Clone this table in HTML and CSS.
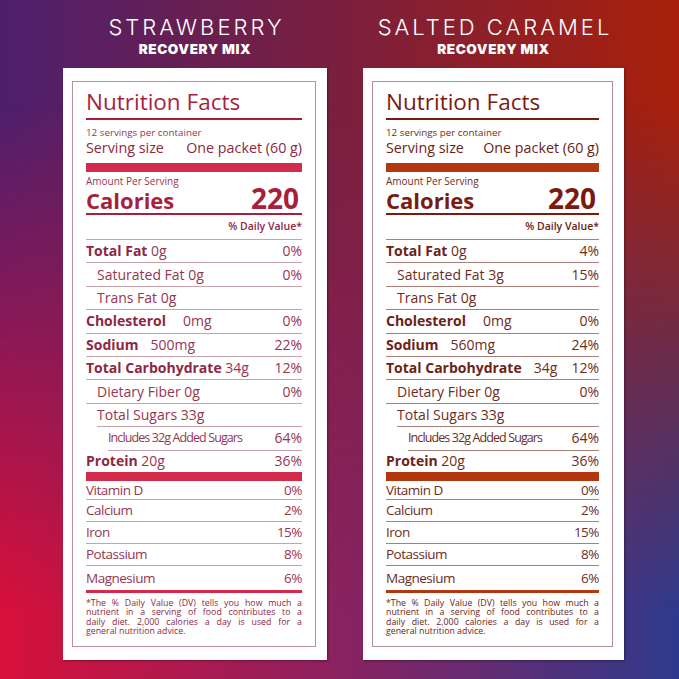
FILE: index.html
```html
<!DOCTYPE html>
<html lang="en">
<head>
<meta charset="utf-8">
<title>Recovery Mix Nutrition Facts</title>
<link rel="stylesheet" href="styles.css">
</head>
<body>
<main class="page">
  <section class="col col-left">
    <header class="flavor">
      <div class="flavor-name">STRAWBERRY</div>
      <div class="flavor-sub">RECOVERY MIX</div>
    </header>
    <div class="card straw">
      <div class="label">
        <h1 class="title">Nutrition Facts</h1>
        <div class="servings">12 servings per container</div>
        <div class="serving-size"><span>Serving size</span><span>One packet (60 g)</span></div>
        <div class="bar"></div>
        <div class="amount">Amount Per Serving</div>
        <div class="calories"><span class="cal-label">Calories</span><span class="cal-num">220</span></div>
        <div class="dv">% Daily Value*</div>
        <div class="row"><span><b>Total Fat</b> 0g</span><span>0%</span></div>
        <div class="row sub"><span>Saturated Fat 0g</span><span>0%</span></div>
        <div class="row sub"><span>Trans Fat 0g</span><span></span></div>
        <div class="row"><span><b>Cholesterol</b><span class="gap-l">0mg</span></span><span>0%</span></div>
        <div class="row"><span><b>Sodium</b><span class="gap-m">500mg</span></span><span>22%</span></div>
        <div class="row"><span><b>Total Carbohydrate</b> 34g</span><span>12%</span></div>
        <div class="row sub"><span>Dietary Fiber 0g</span><span>0%</span></div>
        <div class="row sub line-indent"><span>Total Sugars 33g</span><span></span></div>
        <div class="row subsub line-indent2"><span class="cond">Includes 32g Added Sugars</span><span>64%</span></div>
        <div class="row protein"><span><b>Protein</b> 20g</span><span>36%</span></div>
        <div class="bar"></div>
        <div class="vit first"><span>Vitamin D</span><span>0%</span></div>
        <div class="vit"><span>Calcium</span><span>2%</span></div>
        <div class="vit"><span>Iron</span><span>15%</span></div>
        <div class="vit"><span>Potassium</span><span>8%</span></div>
        <div class="vit last"><span>Magnesium</span><span>6%</span></div>
        <p class="foot">
          <span class="fl">*The % Daily Value (DV) tells you how much a</span>
          <span class="fl">nutrient in a serving of food contributes to a</span>
          <span class="fl">daily diet. 2,000 calories a day is used for a</span>
          <span class="fl end">general nutrition advice.</span>
        </p>
      </div>
    </div>
  </section>

  <section class="col col-right">
    <header class="flavor">
      <div class="flavor-name">SALTED CARAMEL</div>
      <div class="flavor-sub">RECOVERY MIX</div>
    </header>
    <div class="card caramel">
      <div class="label">
        <h1 class="title">Nutrition Facts</h1>
        <div class="servings">12 servings per container</div>
        <div class="serving-size"><span>Serving size</span><span>One packet (60 g)</span></div>
        <div class="bar"></div>
        <div class="amount">Amount Per Serving</div>
        <div class="calories"><span class="cal-label">Calories</span><span class="cal-num">220</span></div>
        <div class="dv">% Daily Value*</div>
        <div class="row"><span><b>Total Fat</b> 0g</span><span>4%</span></div>
        <div class="row sub"><span>Saturated Fat 3g</span><span>15%</span></div>
        <div class="row sub"><span>Trans Fat 0g</span><span></span></div>
        <div class="row"><span><b>Cholesterol</b><span class="gap-l">0mg</span></span><span>0%</span></div>
        <div class="row"><span><b>Sodium</b><span class="gap-m">560mg</span></span><span>24%</span></div>
        <div class="row"><span><b>Total Carbohydrate</b><span class="gap-m">34g</span></span><span>12%</span></div>
        <div class="row sub"><span>Dietary Fiber 0g</span><span>0%</span></div>
        <div class="row sub line-indent"><span>Total Sugars 33g</span><span></span></div>
        <div class="row subsub line-indent2"><span class="cond">Includes 32g Added Sugars</span><span>64%</span></div>
        <div class="row protein"><span><b>Protein</b> 20g</span><span>36%</span></div>
        <div class="bar"></div>
        <div class="vit first"><span>Vitamin D</span><span>0%</span></div>
        <div class="vit"><span>Calcium</span><span>2%</span></div>
        <div class="vit"><span>Iron</span><span>15%</span></div>
        <div class="vit"><span>Potassium</span><span>8%</span></div>
        <div class="vit last"><span>Magnesium</span><span>6%</span></div>
        <p class="foot">
          <span class="fl">*The % Daily Value (DV) tells you how much a</span>
          <span class="fl">nutrient in a serving of food contributes to a</span>
          <span class="fl">daily diet. 2,000 calories a day is used for a</span>
          <span class="fl end">general nutrition advice.</span>
        </p>
      </div>
    </div>
  </section>
</main>
</body>
</html>
```

FILE: styles.css
```css
* { box-sizing: border-box; }
html, body { margin: 0; padding: 0; }
body {
  width: 679px;
  height: 679px;
  overflow: hidden;
  font-family: "Open Sans", "Noto Sans", sans-serif;
}
.page {
  position: relative;
  width: 679px;
  height: 679px;
  display: grid;
  grid-template-columns: 264px 261px;
  column-gap: 36px;
  padding-left: 63px;
  background: linear-gradient(to right, #4e1f6e 0%, #7b1f3e 50%, #a8200a 100%);
}
.page::before {
  content: "";
  position: absolute;
  inset: 0;
  background: linear-gradient(to right, #d8103a 0%, #8a2260 50%, #2e3a8c 100%);
  -webkit-mask-image: linear-gradient(to bottom, transparent 15%, #000 90%);
  mask-image: linear-gradient(to bottom, transparent 15%, #000 90%);
}
.col {
  position: relative;
  display: flex;
  flex-direction: column;
}
.flavor {
  height: 68px;
  display: flex;
  flex-direction: column;
  align-items: center;
  color: #fff;
  padding-top: 16px;
}
.flavor-name {
  font-family: Inter, "Lato", sans-serif;
  font-weight: 300;
  font-size: 22px;
  line-height: 23px;
  letter-spacing: 3px;
  margin-right: -3px;
}
.flavor-sub {
  font-family: Inter, "Lato", sans-serif;
  font-weight: 900;
  font-size: 13.5px;
  line-height: 14px;
  letter-spacing: 0.6px;
  margin-top: 3px;
}
.card {
  background: #fff;
  height: 592px;
  padding: 13px 11px 13px 9px;
  box-shadow: 1px 1px 2px rgba(0,0,0,0.35);
}
.straw {
  --title: #a81f3d;
  --text: #8e2742;
  --soft: #983550;
  --bar: #d32b4c;
  --line: #c9a1aa;
  --frame: #bf8d98;
}
.caramel {
  --title: #7a1b0f;
  --text: #6c2317;
  --soft: #6e2c1c;
  --bar: #b3380f;
  --line: #a98079;
  --frame: #b09090;
}
.label {
  height: 100%;
  border: 1px solid var(--frame);
  padding: 0 13px;
  color: var(--soft);
  display: flex;
  flex-direction: column;
}
.title {
  margin: 0;
  padding-top: 8px;
  padding-bottom: 4px;
  font-size: 22.5px;
  line-height: 24px;
  font-weight: 400;
  color: var(--title);
  border-bottom: 2px solid var(--title);
}
.servings {
  margin-top: 7px;
  font-size: 9.8px;
  line-height: 12px;
}
.serving-size {
  margin-top: 0;
  display: flex;
  justify-content: space-between;
  font-size: 14.3px;
  line-height: 17px;
  color: var(--text);
}
.bar {
  margin-top: 7px;
  height: 9px;
  background: var(--bar);
  flex: none;
}
.amount {
  margin-top: 3px;
  font-size: 10px;
  line-height: 12px;
}
.calories {
  display: flex;
  justify-content: space-between;
  align-items: baseline;
  padding-bottom: 2px;
  border-bottom: 2px solid var(--title);
  color: var(--title);
  font-weight: 700;
}
.cal-label { font-size: 22px; line-height: 22px; }
.cal-num { font-size: 28px; line-height: 22px; margin-right: 3px; }
.dv {
  margin-top: 5px;
  padding-bottom: 7px;
  text-align: right;
  font-size: 10.5px;
  line-height: 12px;
  font-weight: 600;
  color: var(--text);
  border-bottom: 1px solid var(--line);
}
.row {
  height: 23.4px;
  flex: none;
  display: flex;
  justify-content: space-between;
  align-items: center;
  font-size: 14px;
  line-height: 18px;
  border-bottom: 1px solid var(--line);
}
.row b { font-weight: 700; color: var(--text); }
.row.sub { padding-left: 11px; }
.row.subsub { padding-left: 22px; }
.line-indent { margin-left: 11px; padding-left: 0 !important; }
.line-indent2 { margin-left: 22px; padding-left: 0 !important; }
.gap-l { margin-left: 17px; }
.gap-m { margin-left: 12px; }
.cond {
  font-size: 12.5px;
  letter-spacing: -0.9px;
}
.row.protein {
  height: 21px;
  border-bottom: none;
}
.row.protein + .bar { margin-top: 0; }
.vit {
  height: 22px;
  flex: none;
  display: flex;
  justify-content: space-between;
  align-items: center;
  font-size: 13.5px;
  line-height: 18px;
  font-weight: 400;
  color: var(--soft);
  border-bottom: 1px solid var(--line);
  letter-spacing: -0.5px;
}
.vit.first { height: 19px; }
.vit.last {
  height: 27px;
  border-bottom: 3px solid var(--bar);
}
.foot {
  margin: 6px 0 0;
  font-size: 8.8px;
  line-height: 9.6px;
  font-weight: 500;
  color: var(--text);
}
.fl {
  display: block;
  text-align: justify;
  text-align-last: justify;
}
.fl.end { text-align-last: left; }
```
